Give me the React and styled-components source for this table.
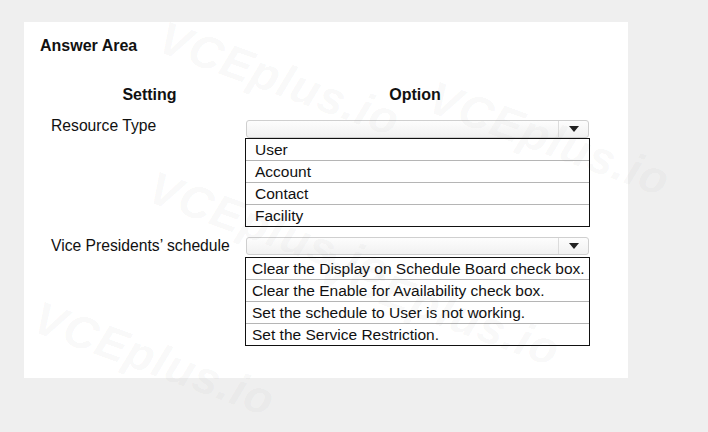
import React from "react";
import styled, { createGlobalStyle } from "styled-components";

const Global = createGlobalStyle`
  html, body { margin: 0; padding: 0; }
  body { background: #efefef; font-family: "Liberation Sans", Arial, sans-serif; color: #111; }
`;

const Page = styled.div`
  position: relative;
  width: 708px;
  height: 432px;
  overflow: hidden;
  box-sizing: border-box;
  padding: 22px 80px 54px 24px;
  background: #efefef;
`;

const Panel = styled.div`
  height: 100%;
  box-sizing: border-box;
  background: #fff;
  padding: 15px 16px;
  display: flex;
  flex-direction: column;
`;

const Title = styled.div`
  font-size: 16px;
  font-weight: bold;
  line-height: 18px;
`;

const Grid = styled.div`
  display: grid;
  grid-template-columns: 205px 345px;
  margin-top: ${(p) => p.$mt}px;
`;

const Head = styled.div`
  font-size: 16px;
  font-weight: bold;
  line-height: 18px;
  text-align: center;
  padding-left: ${(p) => p.$pl || 0}px;
  padding-right: ${(p) => p.$pr || 0}px;
`;

const Label = styled.div`
  font-size: 15.7px;
  line-height: 18px;
  padding-left: 11px;
  margin-top: ${(p) => p.$mt || 0}px;
  white-space: nowrap;
`;

const Option = styled.div`
  display: flex;
  flex-direction: column;
`;

const Select = styled.div`
  height: 18px;
  box-sizing: border-box;
  margin-left: 1px;
  margin-right: 1px;
  border: 1px solid #cfcfcf;
  border-radius: 3px;
  background: linear-gradient(#fdfdfd, #f1f1f1);
  display: flex;
  justify-content: flex-end;
`;

const ArrowBtn = styled.div`
  width: 29px;
  border-left: 1px solid #dcdcdc;
  display: flex;
  align-items: center;
  justify-content: center;
`;

const Tri = styled.div`
  width: 0;
  height: 0;
  border-left: 5px solid transparent;
  border-right: 5px solid transparent;
  border-top: 6px solid #222;
`;

const List = styled.div`
  margin-top: ${(p) => p.$mt || 0}px;
  border: 1px solid #111;
  background: #fff;
  display: flex;
  flex-direction: column;
`;

const Item = styled.div`
  height: 21px;
  line-height: 21px;
  font-size: 15.5px;
  padding-left: ${(p) => p.$pl}px;
  white-space: nowrap;
  & + & { border-top: 1px solid #b5b5b5; }
`;

const Marks = styled.div`
  position: absolute;
  inset: 0;
  pointer-events: none;
`;

const Mark = styled.div`
  position: absolute;
  font-family: "Liberation Sans", Arial, sans-serif;
  font-weight: bold;
  font-style: italic;
  font-size: 46px;
  letter-spacing: 1px;
  color: rgba(90, 90, 90, 0.05);
  transform: rotate(20deg);
  transform-origin: left top;
  white-space: nowrap;
`;

const marks = [
  [170, 10],
  [440, 70],
  [160, 160],
  [330, 240],
  [45, 290],
];

const resourceTypes = ["User", "Account", "Contact", "Facility"];
const scheduleOptions = [
  "Clear the Display on Schedule Board check box.",
  "Clear the Enable for Availability check box.",
  "Set the schedule to User is not working.",
  "Set the Service Restriction.",
];

function Dropdown({ items, pad, listTop }) {
  return (
    <Option>
      <Select>
        <ArrowBtn>
          <Tri />
        </ArrowBtn>
      </Select>
      <List $mt={listTop}>
        {items.map((t) => (
          <Item key={t} $pl={pad}>{t}</Item>
        ))}
      </List>
    </Option>
  );
}

export default function App() {
  return (
    <>
      <Global />
      <Page>
        <Panel>
          <Title>Answer Area</Title>
          <Grid $mt={31}>
            <Head $pl={14}>Setting</Head>
            <Head $pr={5}>Option</Head>
          </Grid>
          <Grid $mt={16}>
            <Label $mt={-3}>Resource Type</Label>
            <Dropdown items={resourceTypes} pad={9} listTop={0} />
          </Grid>
          <Grid $mt={10}>
            <Label>Vice Presidents’ schedule</Label>
            <Dropdown items={scheduleOptions} pad={6} listTop={2} />
          </Grid>
        </Panel>
        <Marks>
          {marks.map(([x, y], i) => (
            <Mark key={i} style={{ left: x, top: y }}>VCEplus.io</Mark>
          ))}
        </Marks>
      </Page>
    </>
  );
}
